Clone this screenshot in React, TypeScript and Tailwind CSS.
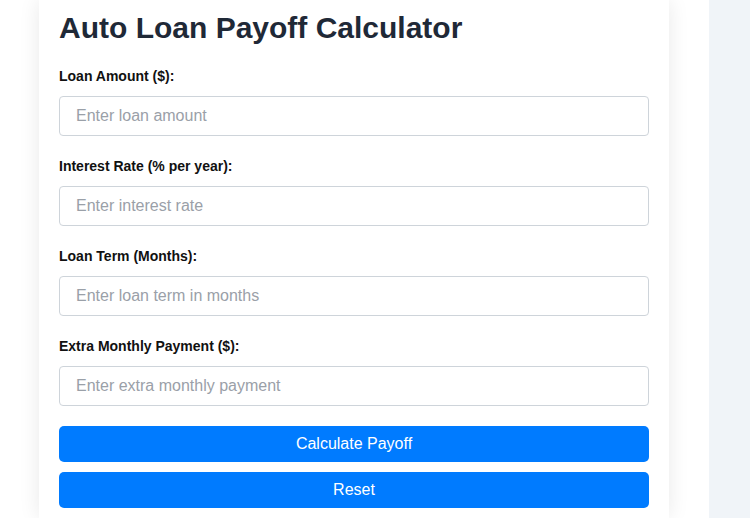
const fields = [
  { label: "Loan Amount ($):", placeholder: "Enter loan amount" },
  { label: "Interest Rate (% per year):", placeholder: "Enter interest rate" },
  { label: "Loan Term (Months):", placeholder: "Enter loan term in months" },
  { label: "Extra Monthly Payment ($):", placeholder: "Enter extra monthly payment" },
];

export default function App() {
  return (
    <div
      className="flex h-[518px] w-[750px] overflow-hidden bg-white"
      style={{ fontFamily: '"Liberation Sans", Arial, sans-serif' }}
    >
      <div className="w-[39px] shrink-0" />
      <div className="w-[630px] shrink-0 bg-white px-5 pt-[10px] shadow-[0_0_20px_rgba(0,0,0,0.09)]">
        <h1 className="mb-5 text-[30px] font-bold leading-9 text-[#1f2937]">
          Auto Loan Payoff Calculator
        </h1>
        {fields.map((f) => (
          <div key={f.label} className="mb-5">
            <label className="mb-[10px] block text-sm font-bold leading-5 text-[#111]">
              {f.label}
            </label>
            <input
              type="text"
              placeholder={f.placeholder}
              className="h-10 w-full rounded border border-[#ced4da] px-4 text-base text-[#333] placeholder:text-[#9aa0a8] outline-none"
            />
          </div>
        ))}
        <div className="flex flex-col gap-[10px]">
          <button className="h-9 w-full rounded-[5px] bg-[#007bff] text-base text-white">
            Calculate Payoff
          </button>
          <button className="h-9 w-full rounded-[5px] bg-[#007bff] text-base text-white">
            Reset
          </button>
        </div>
      </div>
      <div className="w-10 shrink-0" />
      <div className="flex-1 bg-[#f0f4f8]" />
    </div>
  );
}
